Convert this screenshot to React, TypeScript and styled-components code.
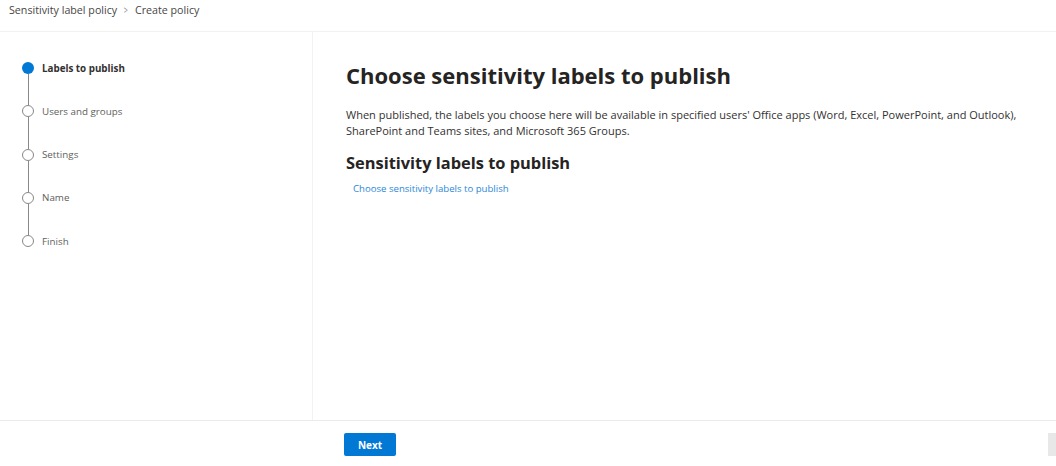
import React from "react";
import styled, { createGlobalStyle } from "styled-components";

const GlobalStyle = createGlobalStyle`
  html, body {
    margin: 0;
    padding: 0;
    background: #ffffff;
  }
  body {
    font-family: "Open Sans", "Noto Sans", "Liberation Sans", sans-serif;
    color: #323130;
  }
`;

interface StepProps {
  active?: boolean;
}

const steps = [
  "Labels to publish",
  "Users and groups",
  "Settings",
  "Name",
  "Finish",
];

export default function App() {
  return (
    <>
      <GlobalStyle />
      <Page>
        <Header>
          <Crumb>Sensitivity label policy</Crumb>
          <Chevron>&gt;</Chevron>
          <Crumb>Create policy</Crumb>
        </Header>
        <Body>
          <Nav>
            {steps.map((label, i) => (
              <Step key={label}>
                <StepRow>
                  <Dot active={i === 0} />
                  <StepLabel active={i === 0}>{label}</StepLabel>
                </StepRow>
                {i < steps.length - 1 && <Connector />}
              </Step>
            ))}
          </Nav>
          <Main>
            <Title>Choose sensitivity labels to publish</Title>
            <Description>
              When published, the labels you choose here will be available in
              specified users' Office apps (Word, Excel, PowerPoint, and
              Outlook), SharePoint and Teams sites, and Microsoft 365 Groups.
            </Description>
            <SubTitle>Sensitivity labels to publish</SubTitle>
            <LinkButton>Choose sensitivity labels to publish</LinkButton>
          </Main>
        </Body>
        <Footer>
          <PrimaryButton>Next</PrimaryButton>
          <ScrollThumb />
        </Footer>
      </Page>
    </>
  );
}

const Page = styled.div`
  display: flex;
  flex-direction: column;
  width: 1056px;
  height: 466px;
  overflow: hidden;
  position: relative;
`;

const Header = styled.div`
  display: flex;
  align-items: flex-start;
  gap: 6px;
  height: 32px;
  padding: 3px 0 0 9px;
  box-sizing: border-box;
  border-bottom: 1px solid #f3f2f1;
  font-size: 10.7px;
  line-height: 15px;
  color: #484644;
`;

const Crumb = styled.span`
  white-space: nowrap;
`;

const Chevron = styled.span`
  color: #8a8886;
  font-size: 10px;
  transform: scaleX(0.7);
`;

const Body = styled.div`
  display: flex;
  height: 388px;
`;

const Nav = styled.div`
  width: 313px;
  flex-shrink: 0;
  border-right: 1px solid #f3f2f1;
  padding: 30px 0 0 22px;
  box-sizing: border-box;
`;

const Step = styled.div`
  display: flex;
  flex-direction: column;
`;

const StepRow = styled.div`
  display: flex;
  align-items: center;
  gap: 8px;
  height: 12px;
`;

const Dot = styled.span<StepProps>`
  width: 12px;
  height: 12px;
  box-sizing: border-box;
  border-radius: 50%;
  flex-shrink: 0;
  background: ${(p) => (p.active ? "#0078d4" : "#ffffff")};
  border: ${(p) => (p.active ? "none" : "1.5px solid #8a8886")};
`;

const StepLabel = styled.span<StepProps>`
  font-size: 9.8px;
  font-weight: ${(p) => (p.active ? 700 : 400)};
  color: ${(p) => (p.active ? "#323130" : "#605e5c")};
  white-space: nowrap;
`;

const Connector = styled.span`
  width: 1px;
  height: 31.3px;
  margin-left: 5.5px;
  background: #8a8886;
`;

const Main = styled.div`
  flex: 1;
  padding: 28px 0 0 33px;
`;

const Title = styled.h1`
  margin: 0;
  font-size: 22px;
  line-height: 30px;
  font-weight: 700;
  color: #252423;
`;

const Description = styled.p`
  margin: 17px 0 0;
  font-size: 11px;
  line-height: 16px;
  color: #323130;
  max-width: 690px;
`;

const SubTitle = styled.h2`
  margin: 12px 0 0;
  font-size: 16.4px;
  line-height: 24px;
  font-weight: 700;
  color: #252423;
`;

const LinkButton = styled.button`
  display: block;
  margin: 7px 0 0 7px;
  padding: 0;
  border: none;
  background: none;
  font-family: inherit;
  font-size: 9.6px;
  color: #2b88d8;
  cursor: pointer;
`;

const Footer = styled.div`
  flex: 1;
  display: flex;
  align-items: flex-start;
  border-top: 1px solid #edebe9;
  padding: 12px 0 0 344px;
`;

const PrimaryButton = styled.button`
  width: 52px;
  height: 23px;
  border: none;
  border-radius: 2px;
  background: #0078d4;
  color: #ffffff;
  font-family: inherit;
  font-size: 10px;
  font-weight: 700;
  cursor: pointer;
`;

const ScrollThumb = styled.span`
  position: absolute;
  right: 0;
  bottom: 10px;
  width: 8px;
  height: 23px;
  background: #e8e8e8;
`;
